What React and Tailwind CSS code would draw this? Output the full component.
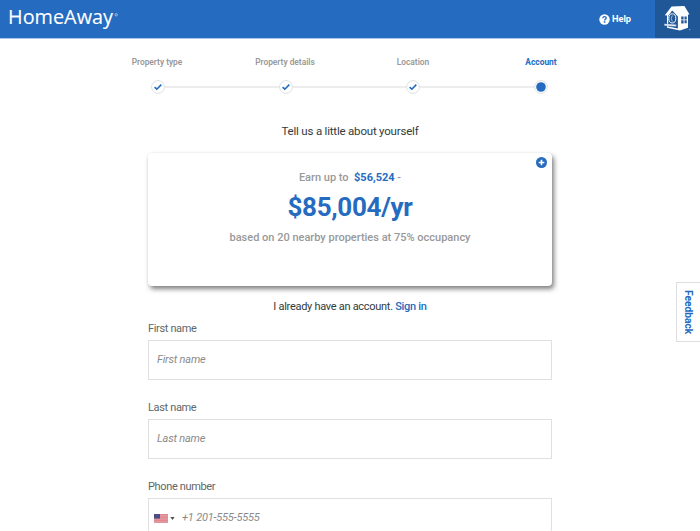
import React from 'react';

const steps = ['Property type', 'Property details', 'Location', 'Account'];

function BirdHouse() {
  return (
    <svg width="30" height="28" viewBox="0 0 30 28" className="block">
      <path d="M8.6 1.4 L21.4 1 L26.4 9.2 L25 9.8 V22.8 L17 25.4 L4 22.8 V10.6 L1.8 10.2 Z" fill="#fff" />
      <path d="M5.2 10.8 L9.2 5.4 L14.9 11.6 V23.6 L5.2 21.6 Z" fill="#205796" />
      <ellipse cx="9.3" cy="13.4" rx="3.5" ry="4.6" fill="#205796" stroke="#fff" strokeWidth="1" />
      <path d="M9.4 10.4 Q7 13.4 9.4 16.6" fill="none" stroke="#fff" strokeWidth=".6" />
      <path d="M1.2 18.8 L13.4 19.4 L13 21.4 L1.2 20.7Z" fill="#fff" stroke="#205796" strokeWidth=".4" />
      <path d="M18.2 11.4h2.4v3h-2.4zM21.5 11.4h2.2v3h-2.2zM18.2 15.3h2.4v3.2h-2.4zM21.5 15.3h2.2v3h-2.2z" fill="#205796" />
      <circle cx="26.8" cy="24.6" r=".7" fill="#9db9da" />
    </svg>
  );
}

function Header() {
  return (
    <header className="flex h-[39px] justify-between border-b border-[#a9c6e8] bg-[#256bbf]">
      <div className="flex pl-[8px] text-white" style={{ fontFamily: '"Open Sans", sans-serif' }}>
        <svg width="112" height="36" viewBox="0 0 112 36" className="block">
          <text x="0" y="24.2" fontSize="20" textLength="105" lengthAdjust="spacingAndGlyphs" fill="#fff" stroke="#fff" strokeWidth=".1">HomeAway</text>
          <circle cx="108.2" cy="14.8" r="1.2" fill="none" stroke="#b9d0eb" strokeWidth=".8" />
        </svg>
      </div>
      <div className="flex">
        <div className="flex items-center pr-[24px] text-white">
          <svg width="11" height="11" viewBox="0 0 11 11" className="mr-[2px] block">
            <circle cx="5.5" cy="5.5" r="5.2" fill="#fff" />
            <path d="M3.8 4.2C3.9 2 7.2 2.1 7.2 4.1C7.2 5.3 5.6 5.2 5.6 6.5" fill="none" stroke="#256bbf" strokeWidth="1.4" />
            <rect x="4.8" y="7.2" width="1.6" height="1.5" fill="#256bbf" />
          </svg>
          <span className="text-[9.2px] font-bold">Help</span>
        </div>
        <div className="flex w-[45px] justify-center bg-[#205796] pt-[5px]">
          <BirdHouse />
        </div>
      </div>
    </header>
  );
}

function Stepper() {
  return (
    <nav className="mx-auto w-[512px]">
      <div className="-ml-px grid w-[512px] grid-cols-4 text-center text-[8.4px] leading-[12px] font-bold text-[#999]">
        {steps.map((s, i) => (
          <span key={s} className={i === 3 ? 'text-[#256bbf]' : 'font-semibold'}>{s}</span>
        ))}
      </div>
      <div className="mt-[12px] ml-[57px] flex w-[397px] items-center">
        {steps.map((s, i) => (
          <React.Fragment key={s}>
            {i > 0 && <div className="h-[2px] flex-1 bg-[#ededed]" />}
            <svg width="14" height="14" viewBox="0 0 14 14" className="block shrink-0">
              <circle cx="7" cy="7" r="6.4" fill="#fff" stroke="#dcdfe2" strokeWidth="1" />
              {i < 3 ? (
                <path d="M3.6 7.2 L5.8 9.2 L10.3 4.6" fill="none" stroke="#256bbf" strokeWidth="1.6" />
              ) : (
                <circle cx="7" cy="7" r="4.8" fill="#256bbf" />
              )}
            </svg>
          </React.Fragment>
        ))}
      </div>
    </nav>
  );
}

function EstimateCard() {
  return (
    <section className="relative mt-[14px] h-[133px] rounded-[4px] bg-white pt-[17px] text-center font-medium text-[#999] shadow-[2px_3px_5px_rgba(0,0,0,0.5),0_0_2px_rgba(0,0,0,0.06)]">
      <svg width="11" height="11" viewBox="0 0 11 11" className="absolute top-[4px] right-[5px] block">
        <circle cx="5.5" cy="5.5" r="5.5" fill="#256bbf" />
        <path d="M5.5 2.7V8.3M2.7 5.5H8.3" stroke="#fff" strokeWidth="1.6" />
      </svg>
      <p className="text-[11px] leading-[16px] whitespace-pre">
        Earn up to  <span className="font-bold text-[#256bbf]">$56,524</span> -
      </p>
      <p className="mt-[3px] text-[26px] leading-[36px] font-bold tracking-[-0.3px] text-[#256bbf]">$85,004/yr</p>
      <p className="mt-[5px] text-[11px] leading-[16px]">based on 20 nearby properties at 75% occupancy</p>
    </section>
  );
}

function Field({ label, className, children }) {
  return (
    <div className={className}>
      <label className="block text-[11px] leading-[14px] tracking-[-0.35px] text-[#5e6769]">{label}</label>
      <div className="mt-[4px] flex h-[40px] items-center border border-[#e0e0e0] pl-[8px] text-[11px] tracking-[-0.2px] text-[#8b8b8b] italic">
        {children}
      </div>
    </div>
  );
}

function Flag() {
  return (
    <svg width="14" height="9" viewBox="0 0 14 9" className="-ml-[3px] block">
      <rect width="14" height="9" fill="#e9a0a8" />
      <path d="M0 .5H14M0 2H14M0 3.5H14M0 5H14M0 6.5H14M0 8H14" stroke="#dc7f8a" strokeWidth=".7" />
      <rect width="6" height="4.6" fill="#4c4d86" />
    </svg>
  );
}

export default function App() {
  return (
    <div className="relative h-[531px] w-[700px] overflow-hidden bg-white" style={{ fontFamily: 'Roboto, sans-serif' }}>
      <Header />
      <div className="pt-[17px]">
        <Stepper />
      </div>
      <main className="mx-auto w-[404px]">
        <h1 className="mt-[29px] text-center text-[11.5px] leading-[16px] tracking-[-0.2px] text-[#333b3c]">Tell us a little about yourself</h1>
        <EstimateCard />
        <p className="mt-[13px] text-center text-[11px] leading-[16px] tracking-[-0.29px] text-[#333b3c]">
          I already have an account. <span className="font-medium text-[#256bbf]">Sign in</span>
        </p>
        <Field label="First name" className="mt-[7px]">First name</Field>
        <Field label="Last name" className="mt-[21px]">Last name</Field>
        <Field label="Phone number" className="mt-[21px]">
          <Flag />
          <svg width="5" height="3" viewBox="0 0 5 3" className="mr-[7px] ml-[2px] block">
            <path d="M.3 0H4.7L2.5 3Z" fill="#555" />
          </svg>
          +1 201-555-5555
        </Field>
      </main>
      <button className="absolute top-[282px] right-[-1px] flex h-[60px] w-[25px] items-center justify-center border border-[#dedede] bg-white text-[10.2px] font-bold text-[#256bbf]">
        <span className="[writing-mode:vertical-rl]">Feedback</span>
      </button>
    </div>
  );
}
